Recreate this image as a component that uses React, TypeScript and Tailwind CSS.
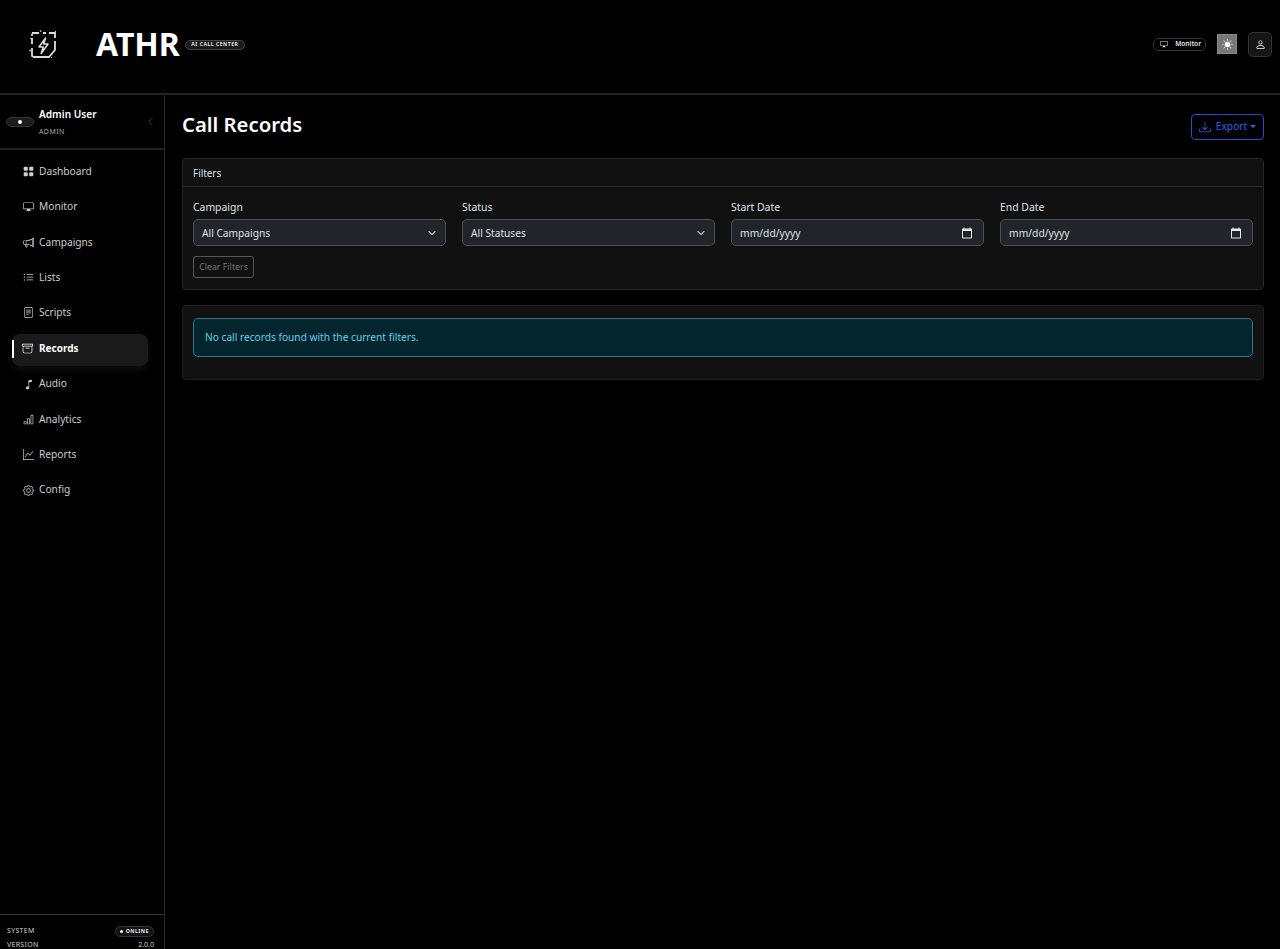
import React from "react";
import { BsGridFill, BsDisplay, BsMegaphone, BsListUl, BsFileText, BsArchive, BsMusicNote, BsBarChart, BsGraphUp, BsGear, BsDownload, BsSunFill, BsPerson, BsChevronLeft, BsChevronDown } from "react-icons/bs";

const nav = [
  { label: "Dashboard", Icon: BsGridFill },
  { label: "Monitor", Icon: BsDisplay },
  { label: "Campaigns", Icon: BsMegaphone },
  { label: "Lists", Icon: BsListUl },
  { label: "Scripts", Icon: BsFileText },
  { label: "Records", Icon: BsArchive, active: true },
  { label: "Audio", Icon: BsMusicNote },
  { label: "Analytics", Icon: BsBarChart },
  { label: "Reports", Icon: BsGraphUp },
  { label: "Config", Icon: BsGear },
];

function Logo() {
  return (
    <svg width="28" height="30" viewBox="0 0 28 30" fill="none" stroke="#dcdcdc" strokeWidth="1.8">
      <path d="M3 4h7M14 4h3M20 4h6v5M26 12v9l-6 7H5l-2-1V19M3 15V9M3 7V5" />
      <path d="M1 9l3 2M11 1l1 2M27 2l-2 2M2 21l-2 1M22 28l1 1" strokeWidth="1" />
      <path d="M16.5 9l-6.5 9h4.2l-2 6.5 6.8-9.5h-4.3z" strokeWidth="1.5" strokeLinejoin="round" />
    </svg>
  );
}

function CalendarIcon() {
  return (
    <svg width="12" height="12" viewBox="0 0 24 24" fill="#e8e8e8">
      <path d="M20 3h-1V1h-2v2H7V1H5v2H4c-1.1 0-2 .9-2 2v16c0 1.1.9 2 2 2h16c1.1 0 2-.9 2-2V5c0-1.1-.9-2-2-2zm0 18H4V8h16v13z" />
    </svg>
  );
}

function Field({ label, value, date }: { label: string; value: string; date?: boolean }) {
  return (
    <div className="flex flex-col">
      <div className="h-[26px] pt-[1px] text-[10.4px] leading-[26px] text-[#dee2e6]">{label}</div>
      <div className={date ? "flex h-[27px] items-center justify-between rounded-[5px] border border-[#495057] bg-[#212529] pl-2 pr-[10px] text-[10.3px] text-[#dee2e6]" : "flex h-[27px] items-center justify-between rounded-[5px] border border-[#495057] bg-[#212529] pl-2 pr-[9px] text-[10.2px] text-[#dee2e6]"}>
        <span className="pt-[2px]">{value}</span>
        {date ? <CalendarIcon /> : <BsChevronDown className="h-[8px] w-[8px] stroke-[1px] text-[#dee2e6]" />}
      </div>
    </div>
  );
}

export default function App() {
  return (
    <div className="flex h-screen flex-col overflow-hidden bg-black text-white" style={{ fontFamily: '"Noto Sans", "Open Sans", sans-serif' }}>
      <header className="flex h-[95px] shrink-0 items-center justify-between border-b-2 border-[#222222] pl-[29px] pr-[8px] pb-[5px]">
        <div className="flex items-center">
          <Logo />
          <span className="ml-[39px] text-[32px] font-bold leading-none">ATHR</span>
          <span className="ml-[5px] mt-[1px] flex h-[10px] items-center rounded-full border border-[#444444] bg-[#1a1a1a] px-[5.5px] text-[5px] font-bold tracking-[0.55px] text-[#e5e5e5]">AI CALL CENTER</span>
        </div>
        <div className="flex items-center">
          <div className="flex h-[13px] items-center gap-[7px] rounded-[5px] border border-[#333333] pl-[6px] pr-[4px] text-[6.6px] font-semibold text-[#e5e5e5]">
            <BsDisplay className="text-[8px]" />
            Monitor
          </div>
          <div className="ml-[11px] flex h-[20px] w-[20px] items-center justify-center border border-[#8a8a8a] bg-[#777777]">
            <BsSunFill className="text-[11px] text-white" />
          </div>
          <div className="ml-[11px] flex h-[25px] w-[24px] items-center justify-center rounded-[5px] border border-[#333333] bg-[#161616]">
            <BsPerson className="text-[11px] text-white" />
          </div>
        </div>
      </header>
      <div className="flex min-h-0 flex-1">
        <aside className="flex w-[165px] shrink-0 flex-col border-r border-[#2a2a2a]">
          <div className="flex h-[55px] shrink-0 items-center border-b-2 border-[#222222] pl-[6px] pr-[9px]">
            <div className="flex h-[10px] w-[28px] items-center justify-center rounded-full border border-[#333333] bg-[#1c1c1c]">
              <div className="h-[4px] w-[4px] rounded-full bg-white" />
            </div>
            <div className="ml-[5px] flex flex-col">
              <span className="text-[10.1px] font-semibold leading-[14px] text-white">Admin User</span>
              <span className="mt-[6px] text-[7px] leading-[10px] tracking-[0.4px] text-[#a8a8a8]">ADMIN</span>
            </div>
            <BsChevronLeft className="ml-auto text-[9px] text-[#4a4a4a]" />
          </div>
          <nav className="flex flex-1 flex-col pl-[12px] pr-[16px] pt-[4px]">
            {nav.map(({ label, Icon, active }) => (
              <div key={label} className={active ? "relative mb-[0.5px] mt-[3.5px] flex h-[32px] items-center rounded-[8px] bg-[#1a1a1a] pb-[3px] pl-[10px] shadow-[0_4px_8px_rgba(60,60,60,0.25)]" : "flex h-[35.3px] items-center pl-[10.5px]"}>
                {active && <span className="absolute left-0 top-[6px] h-[18px] w-[1.5px] bg-white" />}
                <Icon className={active ? "h-[11px] w-[11px] text-white" : "h-[11px] w-[11px] text-[#d0d0d0]"} />
                <span className={active ? "ml-[6px] text-[10px] font-bold text-white" : "ml-[5.5px] text-[10.2px] text-[#cccccc]"}>{label}</span>
              </div>
            ))}
          </nav>
          <div className="h-[35px] shrink-0 border-t border-[#333333] pl-[7px] pr-[10px] pt-[10px] text-[7px] tracking-[0.3px] text-[#cfcfcf]">
            <div className="flex h-[13px] items-center justify-between">
              <span>SYSTEM</span>
              <span className="flex h-[11px] items-center gap-[3px] rounded-full border border-[#333333] bg-[#121212] px-[4px] text-[5.2px] font-bold tracking-[0.5px] text-[#e5e5e5]">
                <span className="h-[3px] w-[3px] rounded-full bg-white" />
                ONLINE
              </span>
            </div>
            <div className="mt-[2px] flex items-center justify-between">
              <span>VERSION</span>
              <span className="tracking-normal">2.0.0</span>
            </div>
          </div>
        </aside>
        <main className="min-w-0 flex-1 pl-[17px] pr-[16px]">
          <div className="flex h-[63px] items-center justify-between">
            <h1 className="pb-[5px] text-[20.3px] font-semibold text-white">Call Records</h1>
            <div className="flex h-[26px] w-[73px] items-center justify-center rounded-[4px] border border-[#1d4ed8] text-[10.2px] text-[#2563eb]">
              <BsDownload className="h-[12px] w-[12px]" />
              <span className="ml-[5px]">Export</span>
              <span className="ml-[3px] h-0 w-0 border-x-[3px] border-t-[3px] border-x-transparent border-t-[#2563eb]" />
            </div>
          </div>
          <section className="h-[132px] rounded-[4px] border border-[#262626] bg-[#111111]">
            <div className="flex h-[28px] items-center border-b border-[#2a2a2a] px-[10px] pt-[1px] text-[9.9px] text-[#dee2e6]">Filters</div>
            <div className="px-[10px] pt-[6px]">
              <div className="grid grid-cols-4 gap-x-[16px]">
                <Field label="Campaign" value="All Campaigns" />
                <Field label="Status" value="All Statuses" />
                <Field label="Start Date" value="mm/dd/yyyy" date />
                <Field label="End Date" value="mm/dd/yyyy" date />
              </div>
              <div className="mt-[10px] flex h-[22px] w-[61px] items-center justify-center rounded-[3px] border border-[#555555] pt-[1px] text-[8.8px] text-[#6c757d]">Clear Filters</div>
            </div>
          </section>
          <section className="mt-[15px] h-[75px] rounded-[4px] border border-[#1f1f1f] bg-[#111111] px-[10px] pt-[12px]">
            <div className="flex h-[39px] items-center rounded-[5px] border border-[#277a88] bg-[#03252d] pl-[11px] text-[10.17px] text-[#62d0ea]">No call records found with the current filters.</div>
          </section>
        </main>
      </div>
    </div>
  );
}
